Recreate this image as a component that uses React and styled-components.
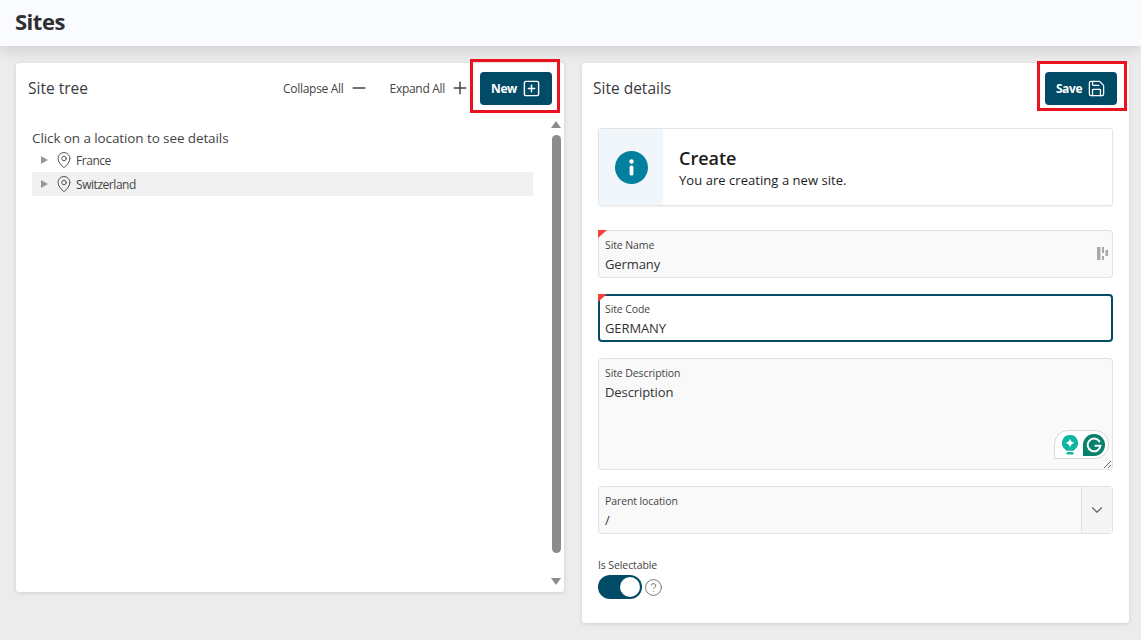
import React from "react";
import styled, { createGlobalStyle } from "styled-components";
import { ChevronDown, CircleHelp, MapPin, Minus, Plus, Save, SquarePlus } from "lucide-react";

const GlobalStyle = createGlobalStyle`
  html, body {
    margin: 0;
    height: 100%;
    overflow: hidden;
    background: #ececec;
  }
  * {
    box-sizing: border-box;
  }
  body {
    font-family: "Open Sans", "Noto Sans", sans-serif;
    color: #333;
  }
`;

const Page = styled.div`
  display: flex;
  flex-direction: column;
  height: 640px;
`;

const Header = styled.header`
  height: 46px;
  padding-left: 15px;
  display: flex;
  align-items: center;
  background: #fafbff;
  box-shadow: 0 4px 14px rgba(0, 0, 0, 0.13);
`;

const PageTitle = styled.h1`
  margin: 0 0 4px;
  font-size: 22px;
  font-weight: 700;
  letter-spacing: -0.5px;
  color: #2f2f33;
`;

const Main = styled.main`
  display: flex;
  align-items: flex-start;
  gap: 18px;
  padding: 17px 12px 0 16px;
`;

const Card = styled.section`
  flex: 0 0 ${(p) => p.$width}px;
  height: ${(p) => p.$height}px;
  display: flex;
  flex-direction: column;
  background: #fff;
  border-radius: 3px;
  box-shadow: 0 1px 4px rgba(0, 0, 0, 0.12);
`;

const CardHeader = styled.div`
  position: relative;
  display: flex;
  align-items: center;
  height: 50px;
  padding: 0 12px 0 ${(p) => p.$left}px;
  flex-shrink: 0;
`;

const CardTitle = styled.h2`
  margin: 0 auto 0 0;
  font-size: 15.5px;
  font-weight: 500;
  color: #3a3a3e;
`;

const TreeAction = styled.button`
  display: flex;
  align-items: center;
  gap: 5px;
  margin-right: ${(p) => p.$gap}px;
  padding: 0;
  border: 0;
  background: none;
  font: inherit;
  font-size: 12px;
  letter-spacing: -0.3px;
  color: #444;
  cursor: pointer;
`;

const PrimaryButton = styled.button`
  display: flex;
  align-items: center;
  justify-content: center;
  gap: 5px;
  width: 72px;
  height: 33px;
  border: 0;
  border-radius: 4px;
  background: #024b66;
  color: #fff;
  font: inherit;
  font-size: 12px;
  font-weight: 700;
  letter-spacing: -0.4px;
  cursor: pointer;
`;

const Highlight = styled.div`
  position: absolute;
  top: ${(p) => p.$top}px;
  right: ${(p) => p.$right}px;
  width: 90px;
  height: ${(p) => p.$height}px;
  border: 3px solid #e8131f;
  pointer-events: none;
`;

const TreeBody = styled.div`
  flex: 1;
  display: flex;
  min-height: 0;
  padding: 5px 3px 7px 16px;
`;

const TreeContent = styled.div`
  width: 501px;
  padding-top: 11px;
`;

const Hint = styled.p`
  margin: 0 0 1px;
  font-size: 13.5px;
  line-height: 18px;
  letter-spacing: -0.1px;
  color: #444;
`;

const TreeRow = styled.div`
  display: flex;
  align-items: center;
  height: 24px;
  padding-left: 9px;
  background: ${(p) => (p.$active ? "#f1f1f1" : "transparent")};
  font-size: 12px;
  letter-spacing: -0.45px;
  color: #444;
`;

const Caret = styled.span`
  width: 0;
  height: 0;
  margin-right: 7px;
  border-left: 7px solid #999;
  border-top: 4.5px solid transparent;
  border-bottom: 4.5px solid transparent;
`;

const RowLabel = styled.span`
  margin-left: 3px;
`;

const Scrollbar = styled.div`
  display: flex;
  flex-direction: column;
  align-items: center;
  width: 10px;
  margin-left: 18px;
`;

const ScrollThumb = styled.div`
  flex: 1;
  width: 9px;
  margin: 7px 0 25px;
  border-radius: 5px;
  background: #8c8c8c;
`;

const ScrollArrow = styled.span`
  width: 0;
  height: 0;
  margin-top: ${(p) => (p.$up ? 3 : 0)}px;
  border-left: 5px solid transparent;
  border-right: 5px solid transparent;
  border-${(p) => (p.$up ? "bottom" : "top")}: 7px solid #8c8c8c;
`;

const Form = styled.div`
  display: flex;
  flex-direction: column;
  gap: 16px;
  padding: 15px 16px 0;
`;

const InfoBox = styled.div`
  display: flex;
  height: 78px;
  margin-bottom: 8px;
  border: 1px solid #e4e4e6;
  border-radius: 3px;
  overflow: hidden;
  box-shadow: 0 1px 2px rgba(0, 0, 0, 0.06);
`;

const InfoIconCell = styled.div`
  flex: 0 0 64px;
  display: flex;
  align-items: center;
  justify-content: center;
  background: #f0f6f9;
`;

const InfoIcon = styled.svg`
  width: 33px;
  height: 33px;
`;

const InfoText = styled.div`
  display: flex;
  flex-direction: column;
  justify-content: center;
  padding-left: 16px;
  color: #1c1c1c;
`;

const InfoTitle = styled.div`
  font-size: 18px;
  line-height: 24px;
  font-weight: 600;
`;

const InfoMessage = styled.div`
  margin-top: 2px;
  font-size: 13px;
  line-height: 16px;
  letter-spacing: 0.05px;
`;

const Field = styled.div`
  position: relative;
  display: flex;
  height: ${(p) => p.$height}px;
  border: ${(p) => (p.$focused ? "2px solid #024b66" : "1px solid #e2e2e4")};
  border-radius: 4px;
  background: ${(p) => (p.$focused ? "#fff" : "#f9f9f9")};
`;

const RequiredMark = styled.span`
  position: absolute;
  top: ${(p) => (p.$focused ? -2 : -1)}px;
  left: ${(p) => (p.$focused ? -2 : -1)}px;
  width: 0;
  height: 0;
  border-top: 8px solid #f44336;
  border-right: 9px solid transparent;
`;

const FieldBody = styled.div`
  flex: 1;
  display: flex;
  flex-direction: column;
  min-width: 0;
  padding: ${(p) => (p.$focused ? "6px 5px 0" : "7px 6px 0")};
`;

const FieldLabel = styled.label`
  font-size: 10.5px;
  line-height: 14px;
  letter-spacing: -0.1px;
  color: #444;
`;

const FieldInput = styled.input`
  width: 100%;
  height: 24px;
  padding: 0;
  border: 0;
  outline: 0;
  background: transparent;
  font: inherit;
  font-size: 13px;
  letter-spacing: -0.1px;
  color: #333;
`;

const FieldArea = styled.textarea`
  flex: 1;
  width: calc(100% + 6px);
  margin-right: -6px;
  padding: 3px 0 0;
  border: 0;
  outline: 0;
  background: transparent;
  font: inherit;
  font-size: 13px;
  letter-spacing: -0.1px;
  color: #333;
  resize: vertical;
`;

const FillIcon = styled.svg`
  position: absolute;
  top: 15px;
  right: 3px;
  width: 13px;
  height: 15px;
`;

const SelectToggle = styled.div`
  flex: 0 0 31px;
  display: flex;
  align-items: center;
  justify-content: center;
  border-left: 1px solid #e2e2e4;
  background: #f5f5f5;
  color: #666;
`;

const GrammarlyBadge = styled.div`
  position: absolute;
  right: 3px;
  bottom: 10px;
  display: flex;
  align-items: center;
  gap: 5px;
  width: 55px;
  height: 29px;
  padding-left: 7px;
  background: #fff;
  border: 1px solid #d5d9e6;
  border-radius: 14px 14px 14px 0;
`;

const BulbIcon = styled.svg`
  width: 16px;
  height: 20px;
`;

const GrammarlyIcon = styled.svg`
  width: 22px;
  height: 22px;
`;

const ToggleGroup = styled.div`
  display: flex;
  flex-direction: column;
  margin-top: 8px;
`;

const ToggleLabel = styled.span`
  font-size: 10.5px;
  line-height: 14px;
  letter-spacing: -0.1px;
  color: #444;
`;

const ToggleRow = styled.div`
  display: flex;
  align-items: center;
  gap: 2px;
  margin-top: 3px;
  color: #555;
`;

const Toggle = styled.div`
  display: flex;
  align-items: center;
  justify-content: flex-end;
  width: 44px;
  height: 24px;
  padding: 2px;
  border-radius: 12px;
  background: #024b66;
`;

const ToggleKnob = styled.span`
  width: 20px;
  height: 20px;
  border-radius: 50%;
  background: #fff;
`;

const FormField = ({ label, value, focused, fill }) => (
  <Field $height={48} $focused={focused}>
    <RequiredMark $focused={focused} />
    <FieldBody $focused={focused}>
      <FieldLabel>{label}</FieldLabel>
      <FieldInput defaultValue={value} />
    </FieldBody>
    {fill && (
      <FillIcon viewBox="0 0 13 15">
        <path fill="#a8a8a8" d="M1 1h3.5v13H1zM6 1h2v6H6zM6 10h2v4H6zM9.5 4H12v6H9.5z" />
      </FillIcon>
    )}
  </Field>
);

const App = () => (
  <Page>
    <GlobalStyle />
    <Header>
      <PageTitle>Sites</PageTitle>
    </Header>
    <Main>
      <Card $width={547} $height={529}>
        <CardHeader $left={12}>
          <CardTitle>Site tree</CardTitle>
          <TreeAction $gap={21}>
            Collapse All <Minus size={20} strokeWidth={1.8} />
          </TreeAction>
          <TreeAction $gap={10}>
            Expand All <Plus size={20} strokeWidth={1.8} />
          </TreeAction>
          <PrimaryButton>
            New <SquarePlus size={19} strokeWidth={1.8} />
          </PrimaryButton>
          <Highlight $top={-4} $right={4} $height={54} />
        </CardHeader>
        <TreeBody>
          <TreeContent>
            <Hint>Click on a location to see details</Hint>
            <TreeRow>
              <Caret />
              <MapPin size={18} strokeWidth={1.2} />
              <RowLabel>France</RowLabel>
            </TreeRow>
            <TreeRow $active>
              <Caret />
              <MapPin size={18} strokeWidth={1.2} />
              <RowLabel>Switzerland</RowLabel>
            </TreeRow>
          </TreeContent>
          <Scrollbar>
            <ScrollArrow $up />
            <ScrollThumb />
            <ScrollArrow />
          </Scrollbar>
        </TreeBody>
      </Card>
      <Card $width={547} $height={560}>
        <CardHeader $left={11}>
          <CardTitle>Site details</CardTitle>
          <PrimaryButton>
            Save <Save size={19} strokeWidth={1.6} />
          </PrimaryButton>
          <Highlight $top={-2} $right={2} $height={50} />
        </CardHeader>
        <Form>
          <InfoBox>
            <InfoIconCell>
              <InfoIcon viewBox="0 0 33 33">
                <circle cx="16.5" cy="16.5" r="16.5" fill="#04809f" />
                <circle cx="16.5" cy="10.5" r="2.2" fill="#fff" />
                <rect x="14.6" y="14.5" width="3.8" height="10" rx="1.6" fill="#fff" />
              </InfoIcon>
            </InfoIconCell>
            <InfoText>
              <InfoTitle>Create</InfoTitle>
              <InfoMessage>You are creating a new site.</InfoMessage>
            </InfoText>
          </InfoBox>
          <FormField label="Site Name" value="Germany" fill />
          <FormField label="Site Code" value="GERMANY" focused />
          <Field $height={112}>
            <FieldBody>
              <FieldLabel>Site Description</FieldLabel>
              <FieldArea defaultValue="Description" />
            </FieldBody>
            <GrammarlyBadge>
              <BulbIcon viewBox="0 0 16 20">
                <path
                  fill="#0fb5a0"
                  d="M8 0a8 8 0 0 1 4.8 14.4c-.6.5-.8.9-.8 1.4H4c0-.5-.2-.9-.8-1.4A8 8 0 0 1 8 0z"
                />
                <path fill="#fff" d="M8 3.6c.5 2.4 1.9 3.9 4.4 4.4-2.5.5-3.9 2-4.4 4.4-.5-2.4-1.9-3.9-4.4-4.4 2.5-.5 3.9-2 4.4-4.4z" />
                <rect x="4.5" y="17" width="7" height="2.6" rx="1.2" fill="#0fb5a0" />
              </BulbIcon>
              <GrammarlyIcon viewBox="0 0 22 22">
                <path fill="#07806c" d="M11 0a11 11 0 0 1 0 22H0V11A11 11 0 0 1 11 0z" />
                <path
                  fill="none"
                  stroke="#fff"
                  strokeWidth="2"
                  strokeLinecap="round"
                  d="M16.4 7.4A6.4 6.4 0 1 0 17.4 11.8h-5"
                />
              </GrammarlyIcon>
            </GrammarlyBadge>
          </Field>
          <Field $height={48}>
            <FieldBody>
              <FieldLabel>Parent location</FieldLabel>
              <FieldInput defaultValue="/" />
            </FieldBody>
            <SelectToggle>
              <ChevronDown size={18} strokeWidth={1.6} />
            </SelectToggle>
          </Field>
          <ToggleGroup>
            <ToggleLabel>Is Selectable</ToggleLabel>
            <ToggleRow>
              <Toggle>
                <ToggleKnob />
              </Toggle>
              <CircleHelp size={19} strokeWidth={1} />
            </ToggleRow>
          </ToggleGroup>
        </Form>
      </Card>
    </Main>
  </Page>
);

export default App;
